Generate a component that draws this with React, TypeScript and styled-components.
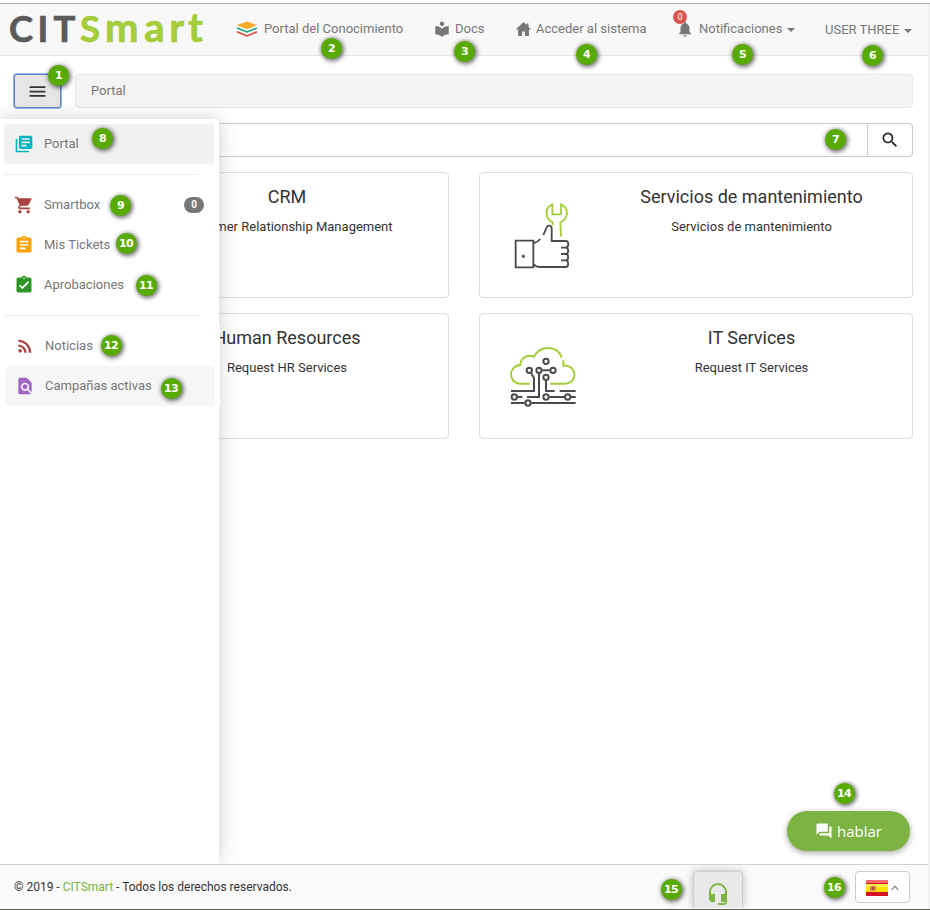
import React from 'react';
import styled, { createGlobalStyle } from 'styled-components';
import {
  MdMenu, MdLocalLibrary, MdNotifications, MdLibraryBooks, MdShoppingCart, MdAssignment,
  MdAssignmentTurnedIn, MdRssFeed, MdFindInPage, MdSearch, MdForum, MdHeadsetMic,
} from 'react-icons/md';

const GlobalStyle = createGlobalStyle`
  *, *::before, *::after { box-sizing: border-box; }
  body { margin: 0; background: #fff; font-family: Roboto, "Liberation Sans", sans-serif; font-size: 13px; color: #333; }
  svg { display: block; flex: none; }
`;

const Page = styled.div`
  position: relative;
  width: 930px;
  height: 910px;
  padding-top: 3px;
  overflow: hidden;
  display: flex;
  flex-direction: column;
  background: #fff;
`;
const Screen = styled.div`
  flex: 1;
  min-height: 0;
  display: flex;
  flex-direction: column;
  border-top: 1px solid #b0b0b0;
  border-bottom: 1px solid #59613c;
`;
const Columns = styled.div`
  flex: 1;
  min-height: 0;
  display: grid;
  grid-template-columns: 928px 2px;
`;
const ScrollTrack = styled.div`
  background: #f1f1f1;
`;
const Layout = styled.div`
  display: flex;
  flex-direction: column;
  min-height: 0;
`;
const Header = styled.header`
  height: 52px;
  flex: none;
  display: grid;
  grid-template-columns: 236px 197px 82px 161px 149px auto;
  background: #f8f8f8;
  border-bottom: 1px solid #e7e7e7;
`;
const NavItem = styled.a<{ $gap?: number; $drop?: number }>`
  position: relative;
  height: 49px;
  display: flex;
  align-items: center;
  gap: ${(p) => p.$gap ?? 5}px;
  padding-top: ${(p) => p.$drop ?? 0}px;
  color: #777;
  white-space: nowrap;
`;
const Caret = styled.span`
  border: 4px solid transparent;
  border-top-color: #777;
  border-bottom: 0;
  margin-top: 3px;
`;
const AlertCount = styled.span`
  position: absolute;
  left: -3px;
  top: 6px;
  width: 14px;
  height: 14px;
  border-radius: 50%;
  background: #d9534f;
  color: #fff;
  font-size: 9px;
  line-height: 14px;
  text-align: center;
`;
const Body = styled.div`
  position: relative;
  flex: 1;
  min-height: 0;
  padding: 17px 15px 0 13px;
`;
const Toolbar = styled.div`
  display: flex;
  gap: 14px;
  height: 36px;
  padding-left: 1px;
`;
const MenuButton = styled.button`
  width: 47px;
  height: 34px;
  margin-top: 1px;
  padding: 0;
  display: flex;
  align-items: center;
  justify-content: center;
  border: 1px solid #6d86b8;
  border-radius: 3px;
  box-shadow: 0 0 0 1px #8fb4f5;
  background: #e6e6e6;
  color: #333;
`;
const Breadcrumb = styled.div`
  flex: 1;
  height: 34px;
  margin-top: 1px;
  padding: 0 15px;
  line-height: 32px;
  border: 1px solid #e7e7e7;
  border-radius: 4px;
  background: #f4f4f4;
  color: #777;
`;
const SearchBar = styled.div`
  height: 34px;
  margin: 14px 0 15px 1px;
  display: flex;
  justify-content: flex-end;
  border: 1px solid #ccc;
  border-radius: 4px;
`;
const SearchButton = styled.div`
  width: 45px;
  display: flex;
  align-items: center;
  justify-content: center;
  border-left: 1px solid #ccc;
  color: #222;
`;
const Cards = styled.div`
  display: grid;
  grid-template-columns: 435px 434px;
  gap: 15px 30px;
  margin-left: 1px;
`;
const Card = styled.article`
  height: 126px;
  display: grid;
  grid-template-columns: 109px 1fr;
  border: 1px solid #ddd;
  border-radius: 4px;
`;
const CardArt = styled.div`
  padding: 2px 0 0 17px;
  display: flex;
  align-items: center;
  justify-content: center;
`;
const CardText = styled.div`
  padding-left: 2px;
  text-align: center;
  white-space: nowrap;
`;
const CardTitle = styled.h2`
  margin: 13px 0 0;
  font-size: 18px;
  font-weight: 400;
  line-height: 22px;
`;
const CardNote = styled.p`
  margin: 10px 0 0;
  line-height: 18px;
`;
const Sidebar = styled.nav`
  position: absolute;
  left: 0;
  top: 63px;
  bottom: 0;
  width: 219px;
  padding: 5px 0 0 4px;
  border-radius: 0 4px 0 0;
  background: #fff;
  box-shadow: 0 0 20px rgba(0, 0, 0, 0.19);
  clip-path: inset(-30px -30px 0 0);
`;
const SideItem = styled.a<{ $bg?: string }>`
  width: 210px;
  height: 40px;
  padding: 0 10px;
  display: flex;
  align-items: center;
  gap: 10px;
  border-radius: 4px;
  background: ${(p) => p.$bg ?? 'transparent'};
  color: #777;
`;
const SideLabel = styled.span`
  margin-top: -2px;
`;
const Rule = styled.hr`
  width: 195px;
  margin: 10px 0;
  border: 0;
  border-top: 1px solid #eee;
`;
const LowerGroup = styled.div`
  width: 216px;
  padding-left: 1px;
  background: #fff;
`;
const CountPill = styled.span`
  margin-left: auto;
  width: 20px;
  height: 16px;
  border-radius: 8px;
  background: #777;
  color: #fff;
  font-size: 10px;
  font-weight: 700;
  line-height: 16px;
  text-align: center;
`;
const ChatButton = styled.button`
  position: absolute;
  left: 787px;
  bottom: 13px;
  width: 123px;
  height: 40px;
  padding: 0;
  display: flex;
  align-items: center;
  justify-content: center;
  gap: 4px;
  border: 0;
  border-radius: 20px;
  background: #7cb342;
  box-shadow: 0 2px 6px rgba(0, 0, 0, 0.35);
  color: #fff;
  font: 15px "Open Sans", sans-serif;
`;
const Footer = styled.footer`
  height: 45px;
  flex: none;
  display: grid;
  grid-template-columns: 680px 161px 55px;
  padding-left: 14px;
  border-top: 1px solid #d3d3d3;
  background: #fafafa;
`;
const Copyright = styled.p`
  margin: 0;
  line-height: 44px;
  font-size: 12px;
`;
const Brand = styled.a`
  color: #7cb342;
`;
const SupportTab = styled.div`
  width: 50px;
  height: 37px;
  margin-top: 6px;
  padding-top: 10px;
  margin-left: -1px;
  display: flex;
  justify-content: center;
  border: 1px solid #ccc;
  border-bottom: 0;
  border-radius: 4px 4px 0 0;
  background: #e9e9e9;
  box-shadow: 0 0 8px rgba(0, 0, 0, 0.25);
  clip-path: inset(-12px -12px 0 -12px);
  color: #7cb342;
`;
const LanguageButton = styled.button`
  width: 55px;
  height: 32px;
  margin-top: 6px;
  padding: 1px 0 0 0;
  display: flex;
  align-items: center;
  justify-content: center;
  gap: 3px;
  border: 1px solid #ccc;
  border-radius: 4px;
  background: #fff;
`;
const Marker = styled.span<{ $x: number; $y: number }>`
  position: absolute;
  left: ${(p) => p.$x - 11}px;
  top: ${(p) => p.$y - 10.5}px;
  width: 21px;
  height: 21px;
  border-radius: 50%;
  background: #57ab04;
  box-shadow: 1px 1px 4px 1px rgba(0, 0, 0, 0.55);
  color: #fff;
  font: bold 11px/21px "DejaVu Sans", sans-serif;
  letter-spacing: -0.6px;
  text-align: center;
`;

const Logo = () => (
  <svg width="236" height="50" fontFamily="Lato, sans-serif" fontWeight="700" fontSize="36.5">
    <text y="38" x="9 37.5 53.5" fill="#5b5b5b" stroke="#5b5b5b" strokeWidth=".7">CIT</text>
    <text y="38" x="80" fill="#a4cd39" stroke="#a4cd39" strokeWidth=".7">
      S<tspan x="105 144.3 169.3 188" fontSize="40">mart</tspan>
    </text>
  </svg>
);

const LayersIcon = () => (
  <svg width="22" height="18" viewBox="0 0 22 18" fill="none">
    <path d="M1 5 11 1.4l10 3.6L11 9.2z" fill="#f5ad27" />
    <path d="M1 8 11 12l10-4" stroke="#1ca67c" strokeWidth="1.6" />
    <path d="M1 11.8 11 16l10-4.2" stroke="#e2463b" strokeWidth="1.6" />
  </svg>
);

const HomeIcon = () => (
  <svg width="17" height="16" viewBox="0 0 17 16" fill="#777">
    <path d="M8.5 1 .8 8.6h2.3V15h4v-4.6h2.8V15h4V8.6h2.3L13.5 5.9V2.4h-2v1.5z" />
  </svg>
);

const ThumbWrenchIcon = () => (
  <svg width="60" height="70" viewBox="102 93 180 210" fill="none" strokeWidth="5.5">
    <g stroke="#4b4b4d">
      <path d="M110 212h53v80h-53z" />
      <path d="M165 219q10-2 19-12M193 195l10-23c3-8 15-6 15 3v38h42c12 0 9 20 0 20h-14m14 0c10 0 10 19 0 19h-14m14 0c10 0 10 19 0 19h-14m14 0c10 0 10 20 0 20h-77q-12 0-19-8" />
      <circle cx="133" cy="259" r="2" fill="#4b4b4d" />
    </g>
    <path d="M221 166v-9c-25-13-24-44-1-54v30h26v-30c24 11 24 42-2 54l2 43" stroke="#a4cd39" />
  </svg>
);

const CloudCircuitIcon = () => (
  <svg width="68" height="64" viewBox="87 105 204 192" fill="none" strokeWidth="6">
    <path d="M149 221h-28c-37-1-38-53 0-56 1-24 25-32 41-25 19-35 69-35 83 2M250 151v16c42-4 46 54 4 54h-43" stroke="#a4cd39" />
    <g stroke="#4b4b4d">
      <path d="M153 189l9 15v39H93M177 190v71h-36M187 181h22M198 212v31h26M239 243h48M113 261h14M208 261h45M273 261h14M93 279h41M154 279h133" />
      <circle cx="198" cy="154" r="8" />
      <circle cx="148" cy="181" r="8" />
      <circle cx="177" cy="181" r="8" />
      <circle cx="219" cy="181" r="8" />
      <circle cx="198" cy="202" r="8" />
      <circle cx="103" cy="261" r="8" />
      <circle cx="198" cy="261" r="8" />
      <circle cx="263" cy="261" r="8" />
      <circle cx="144" cy="279" r="8" />
    </g>
  </svg>
);

const SpainFlag = () => (
  <svg width="22" height="16" viewBox="0 0 22 16">
    <path fill="#d8121d" d="M0 0h22v16H0z" />
    <path fill="#ee6a6c" d="M0 0h22v3H0z" />
    <path fill="#ffe000" d="M0 4h22v8H0z" />
    <path fill="#fff04d" d="M0 4h22v3H0z" />
    <path fill="#d9a04a" d="M4 6h6v5H4z" />
    <path fill="#b84a34" d="M5.5 6.5h3v3.5h-3z" />
  </svg>
);

const ChevronUp = () => (
  <svg width="8" height="6" viewBox="0 0 8 6" fill="none" stroke="#666" strokeWidth="1.1">
    <path d="M.6 5 4 1.2 7.4 5" />
  </svg>
);

const services = [
  { title: 'CRM', note: 'Customer Relationship Management', art: null },
  { title: 'Servicios de mantenimiento', note: 'Servicios de mantenimiento', art: <ThumbWrenchIcon /> },
  { title: 'Human Resources', note: 'Request HR Services', art: null },
  { title: 'IT Services', note: 'Request IT Services', art: <CloudCircuitIcon /> },
];

const markers = [
  [59, 75.5], [332, 48.5], [465, 51.5], [587, 54.5], [743, 54.5], [873, 55.5], [836, 139.5], [103, 138.5],
  [121, 205.5], [126.5, 243.5], [146.5, 285.5], [111.5, 345.5], [171.5, 388], [844.5, 793], [671.5, 889], [834.5, 887.5],
];

export default function App() {
  return (
    <Page>
      <GlobalStyle />
      <Screen>
        <Columns>
          <Layout>
            <Header>
              <Logo />
              <NavItem $gap={6}><LayersIcon />Portal del Conocimiento</NavItem>
              <NavItem $gap={4}><MdLocalLibrary size={18} />Docs</NavItem>
              <NavItem $gap={4}><HomeIcon />Acceder al sistema</NavItem>
              <NavItem $gap={5}>
                <MdNotifications size={18} />Notificaciones<Caret />
                <AlertCount>0</AlertCount>
              </NavItem>
              <NavItem $gap={5} $drop={2}>USER THREE<Caret /></NavItem>
            </Header>
            <Body>
              <Toolbar>
                <MenuButton><MdMenu size={21} /></MenuButton>
                <Breadcrumb>Portal</Breadcrumb>
              </Toolbar>
              <SearchBar>
                <SearchButton><MdSearch size={20} /></SearchButton>
              </SearchBar>
              <Cards>
                {services.map((s) => (
                  <Card key={s.title}>
                    <CardArt>{s.art}</CardArt>
                    <CardText>
                      <CardTitle>{s.title}</CardTitle>
                      <CardNote>{s.note}</CardNote>
                    </CardText>
                  </Card>
                ))}
              </Cards>
              <Sidebar>
                <SideItem $bg="#f1f1f1"><MdLibraryBooks size={20} color="#00b5c0" /><SideLabel>Portal</SideLabel></SideItem>
                <Rule />
                <SideItem>
                  <MdShoppingCart size={20} color="#a94442" /><SideLabel>Smartbox</SideLabel>
                  <CountPill>0</CountPill>
                </SideItem>
                <SideItem><MdAssignment size={20} color="#ffa200" /><SideLabel>Mis Tickets</SideLabel></SideItem>
                <SideItem><MdAssignmentTurnedIn size={20} color="#2c9526" /><SideLabel>Aprobaciones</SideLabel></SideItem>
                <Rule />
                <LowerGroup>
                  <SideItem><MdRssFeed size={20} color="#a94442" /><SideLabel>Noticias</SideLabel></SideItem>
                  <SideItem $bg="#f6f6f6"><MdFindInPage size={20} color="#a066c4" /><SideLabel>Campañas activas</SideLabel></SideItem>
                </LowerGroup>
              </Sidebar>
              <ChatButton><MdForum size={18} />hablar</ChatButton>
            </Body>
            <Footer>
              <Copyright>© 2019 - <Brand>CITSmart</Brand> - Todos los derechos reservados.</Copyright>
              <SupportTab><MdHeadsetMic size={24} /></SupportTab>
              <LanguageButton><SpainFlag /><ChevronUp /></LanguageButton>
            </Footer>
          </Layout>
          <ScrollTrack />
        </Columns>
      </Screen>
      {markers.map(([x, y], i) => (
        <Marker key={i} $x={x} $y={y}>{i + 1}</Marker>
      ))}
    </Page>
  );
}
